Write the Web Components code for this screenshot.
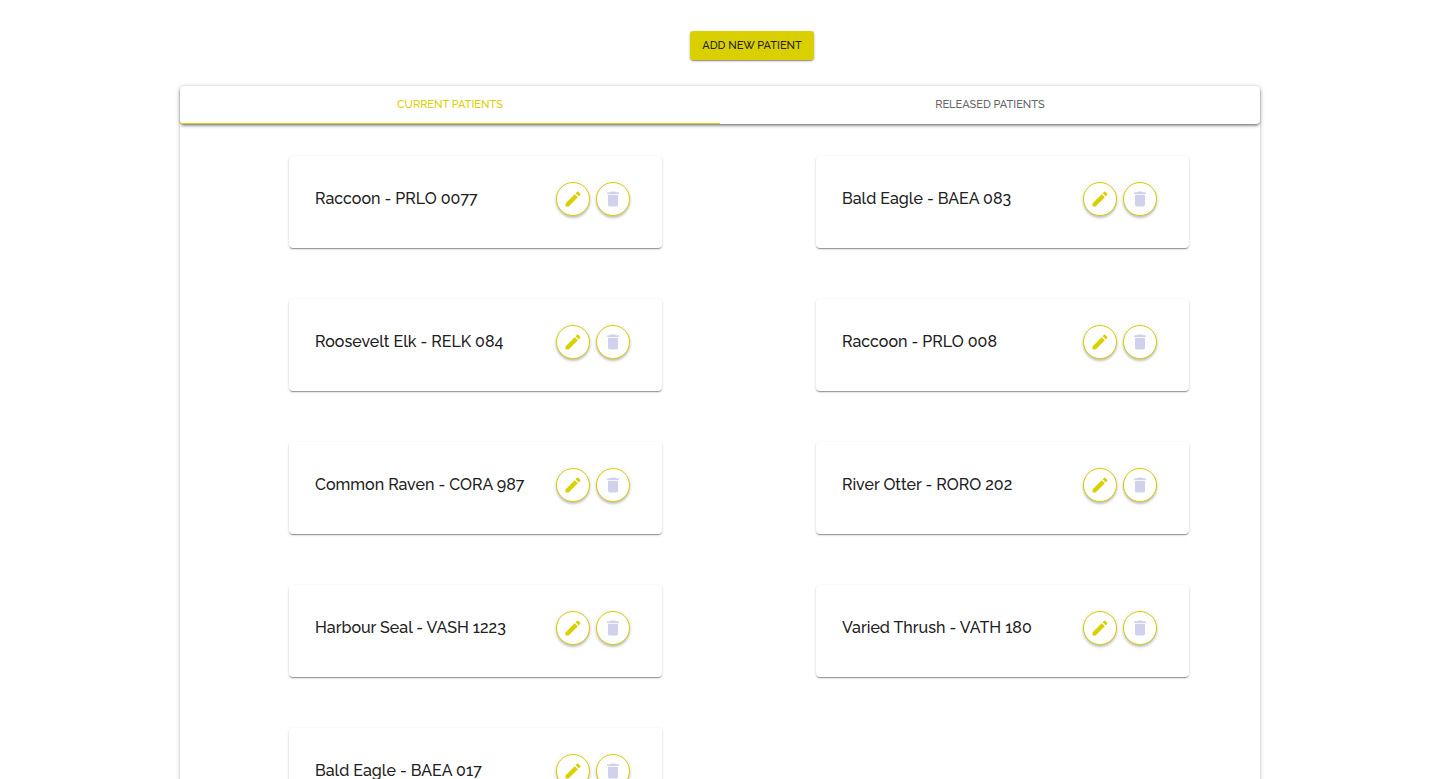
<!DOCTYPE html>
<html lang="en">
<head>
<meta charset="utf-8">
<meta name="viewport" content="width=device-width, initial-scale=1">
<title>Patients</title>
<style>
body { margin: 0; background: #fff; color: #212121; font-family: Raleway, Lato, sans-serif; overflow-x: hidden; }
</style>
</head>
<body>
<patient-app></patient-app>

<template id="app-template">
<style>
:host { display: block; padding-top: 31px; }
header { display: flex; justify-content: center; padding-left: 64px; margin-bottom: 26px; }
.panel { width: 75%; margin: 0 auto; border-radius: 4px; box-shadow: 0 3px 1px -2px rgba(0,0,0,.2), 0 2px 2px rgba(0,0,0,.14), 0 1px 5px rgba(0,0,0,.2); }
.list { display: grid; grid-template-columns: 1fr 1fr; gap: 51px 154px; padding: 32px 71px 51px 109px; }
</style>
<header><action-button>ADD NEW PATIENT</action-button></header>
<main class="panel">
  <tab-bar>
    <tab-item active>CURRENT PATIENTS</tab-item>
    <tab-item>RELEASED PATIENTS</tab-item>
  </tab-bar>
  <div class="list">
    <patient-card>Raccoon - PRLO 0077</patient-card>
    <patient-card>Bald Eagle - BAEA 083</patient-card>
    <patient-card>Roosevelt Elk - RELK 084</patient-card>
    <patient-card>Raccoon - PRLO 008</patient-card>
    <patient-card>Common Raven - CORA 987</patient-card>
    <patient-card>River Otter - RORO 202</patient-card>
    <patient-card>Harbour Seal - VASH 1223</patient-card>
    <patient-card>Varied Thrush - VATH 180</patient-card>
    <patient-card>Bald Eagle - BAEA 017</patient-card>
  </div>
</main>
</template>

<template id="action-button-template">
<style>
:host { display: block; }
button { display: block; height: 29px; padding: 0 12px; border: 0; border-radius: 3px; background: #dad000; color: #212121; font: 500 11px/29px Raleway, Lato, sans-serif; white-space: nowrap; cursor: pointer;
  box-shadow: 0 3px 1px -2px rgba(0,0,0,.2), 0 1px 2px rgba(0,0,0,.24), 0 1px 3px rgba(0,0,0,.12); }
</style>
<button type="button"><slot></slot></button>
</template>

<template id="tab-bar-template">
<style>
:host { display: flex; height: 38px; background: #fff; border-radius: 4px; box-shadow: 0 3px 3px -1px rgba(0,0,0,.3), 0 1px 2px rgba(0,0,0,.2), 0 1px 5px rgba(0,0,0,.12); }
</style>
<slot></slot>
</template>

<template id="tab-item-template">
<style>
:host { display: block; flex: 1; }
button { display: block; box-sizing: border-box; width: 100%; height: 38px; padding: 0; border: 0; border-bottom: 1px solid transparent; background: none; color: #666; font: 500 11px/37px Raleway, Lato, sans-serif; cursor: pointer; }
:host([active]) button { color: #dad000; border-bottom-color: #dad000; }
</style>
<button type="button" role="tab"><slot></slot></button>
</template>

<template id="patient-card-template">
<style>
:host { display: flex; align-items: center; gap: 6px; padding: 26px 32px 32px 26px; background: #fff; border-radius: 4px; box-shadow: 0 2px 1px -1px rgba(0,0,0,.22), 0 1px 1px rgba(0,0,0,.16), 0 1px 3px rgba(0,0,0,.16); }
span { flex: 1; font-size: 16px; font-weight: 500; line-height: 24px; white-space: nowrap; }
</style>
<span><slot></slot></span>
<icon-button icon="edit"></icon-button>
<icon-button icon="delete"></icon-button>
</template>

<template id="icon-button-template">
<style>
:host { display: block; }
button { display: flex; align-items: center; justify-content: center; box-sizing: border-box; width: 34px; height: 34px; padding: 0; border: 1px solid #dad000; border-radius: 50%; background: #fff; color: #dad000; cursor: pointer;
  box-shadow: 0 2px 2px rgba(0,0,0,.16), 0 1px 4px rgba(0,0,0,.14); }
svg { display: block; width: 20px; height: 20px; fill: currentColor; }
:host([icon="delete"]) svg { color: #d1d1ee; }
</style>
<button type="button"><svg viewBox="0 0 24 24" aria-hidden="true"><path></path></svg></button>
</template>

<script>
const icons = {
  edit: 'M3 17.25V21h3.75L17.81 9.94l-3.75-3.75L3 17.25zM20.71 7.04c.39-.39.39-1.02 0-1.41l-2.34-2.34c-.39-.39-1.02-.39-1.41 0l-1.83 1.83 3.75 3.75 1.83-1.83z',
  delete: 'M6 19c0 1.1.9 2 2 2h8c1.1 0 2-.9 2-2V7H6v12zM19 4h-3.5l-1-1h-5l-1 1H5v2h14V4z'
};

class TemplateElement extends HTMLElement {
  constructor() {
    super();
    this.attachShadow({ mode: 'open' });
    this.shadowRoot.append(document.getElementById(this.constructor.template).content.cloneNode(true));
  }
}
class ActionButton extends TemplateElement { static template = 'action-button-template'; }
class TabBar extends TemplateElement {
  static template = 'tab-bar-template';
  connectedCallback() {
    this.setAttribute('role', 'tablist');
    this.addEventListener('click', event => {
      const tab = event.target.closest('tab-item');
      if (tab) for (const item of this.children) item.toggleAttribute('active', item === tab);
    });
  }
}
class TabItem extends TemplateElement {
  static template = 'tab-item-template';
  static observedAttributes = ['active'];
  connectedCallback() { this.update(); }
  attributeChangedCallback() { this.update(); }
  update() { this.shadowRoot.querySelector('button').setAttribute('aria-selected', this.hasAttribute('active')); }
}
class PatientCard extends TemplateElement { static template = 'patient-card-template'; }
class IconButton extends TemplateElement {
  static template = 'icon-button-template';
  connectedCallback() {
    const name = this.getAttribute('icon');
    this.shadowRoot.querySelector('path').setAttribute('d', icons[name]);
    this.shadowRoot.querySelector('button').setAttribute('aria-label', name === 'edit' ? 'Edit patient' : 'Delete patient');
  }
}
class PatientApp extends TemplateElement { static template = 'app-template'; }

customElements.define('action-button', ActionButton);
customElements.define('tab-bar', TabBar);
customElements.define('tab-item', TabItem);
customElements.define('icon-button', IconButton);
customElements.define('patient-card', PatientCard);
customElements.define('patient-app', PatientApp);
</script>
</body>
</html>
